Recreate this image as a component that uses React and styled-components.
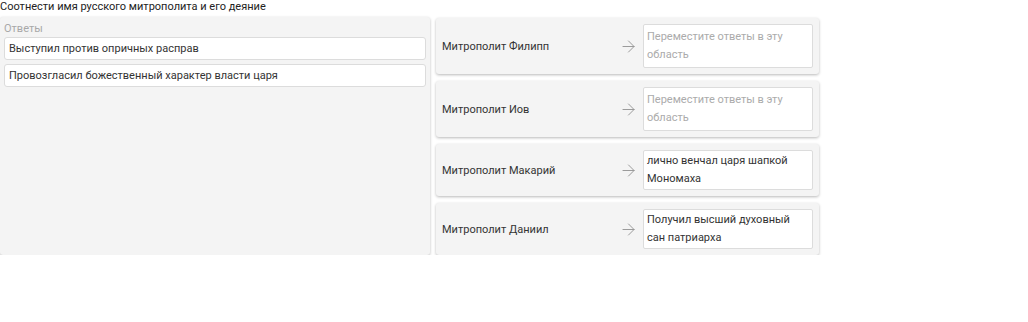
import React from 'react';
import styled, { createGlobalStyle } from 'styled-components';
import { ArrowRight } from 'lucide-react';

const GlobalStyle = createGlobalStyle`
  body {
    margin: 0;
    background: #fff;
    font-family: Roboto, "Liberation Sans", sans-serif;
    color: #212121;
  }
`;

const answers = [
  'Выступил против опричных расправ',
  'Провозгласил божественный характер власти царя',
];

const pairs = [
  { name: 'Митрополит Филипп', answer: null },
  { name: 'Митрополит Иов', answer: null },
  { name: 'Митрополит Макарий', answer: 'лично венчал царя шапкой Мономаха' },
  { name: 'Митрополит Даниил', answer: 'Получил высший духовный сан патриарха' },
];

const App = () => (
  <>
    <GlobalStyle />
    <Title>Соотнести имя русского митрополита и его деяние</Title>
    <Board>
      <AnswerPanel>
        <PanelCaption>Ответы</PanelCaption>
        {answers.map(a => (
          <AnswerItem key={a}>{a}</AnswerItem>
        ))}
      </AnswerPanel>
      <PairList>
        {pairs.map(p => (
          <PairCard key={p.name}>
            <PairName>{p.name}</PairName>
            <Arrow size={19} strokeWidth={1.2} />
            <DropBox $empty={!p.answer}>
              {p.answer || 'Переместите ответы в эту область'}
            </DropBox>
          </PairCard>
        ))}
      </PairList>
    </Board>
  </>
);

const Title = styled.div`
  font-size: 11px;
  line-height: 14px;
  height: 15px;
  color: #222;
`;

const Board = styled.div`
  display: flex;
  gap: 6px;
  align-items: stretch;
  padding-top: 2px;
  width: 819px;
`;

const panelSurface = `
  background: #f4f4f4;
  border-radius: 3px;
  box-shadow: 0 1px 3px rgba(0, 0, 0, 0.28);
`;

const AnswerPanel = styled.div`
  ${panelSurface}
  width: 430px;
  box-sizing: border-box;
  padding: 4px 4px;
  display: flex;
  flex-direction: column;
  gap: 4px;
`;

const PanelCaption = styled.div`
  font-size: 11px;
  line-height: 13px;
  color: #a8a8a8;
  margin-top: 1px;
  margin-bottom: -2px;
`;

const AnswerItem = styled.div`
  background: #fff;
  border: 1px solid #dcdcdc;
  border-radius: 3px;
  height: 21px;
  line-height: 21px;
  padding: 0 4px;
  font-size: 11px;
  color: #333;
`;

const PairList = styled.div`
  display: flex;
  flex-direction: column;
  gap: 7px;
  flex: 1;
  padding-top: 1px;
`;

const PairCard = styled.div`
  ${panelSurface}
  display: flex;
  align-items: center;
  padding: 6px 6px;
`;

const PairName = styled.div`
  flex: 1;
  font-size: 11px;
  color: #333;
`;

const Arrow = styled(ArrowRight)`
  color: #969696;
  margin-right: 5px;
`;

const DropBox = styled.div`
  width: 170px;
  box-sizing: border-box;
  background: #fff;
  border: 1px solid #dcdcdc;
  border-radius: 2px;
  padding: ${({ $empty }) => ($empty ? '3px 3px' : '1px 3px')};
  font-size: 11px;
  line-height: 18px;
  color: ${({ $empty }) => ($empty ? '#ababab' : '#333')};
`;

export default App;
